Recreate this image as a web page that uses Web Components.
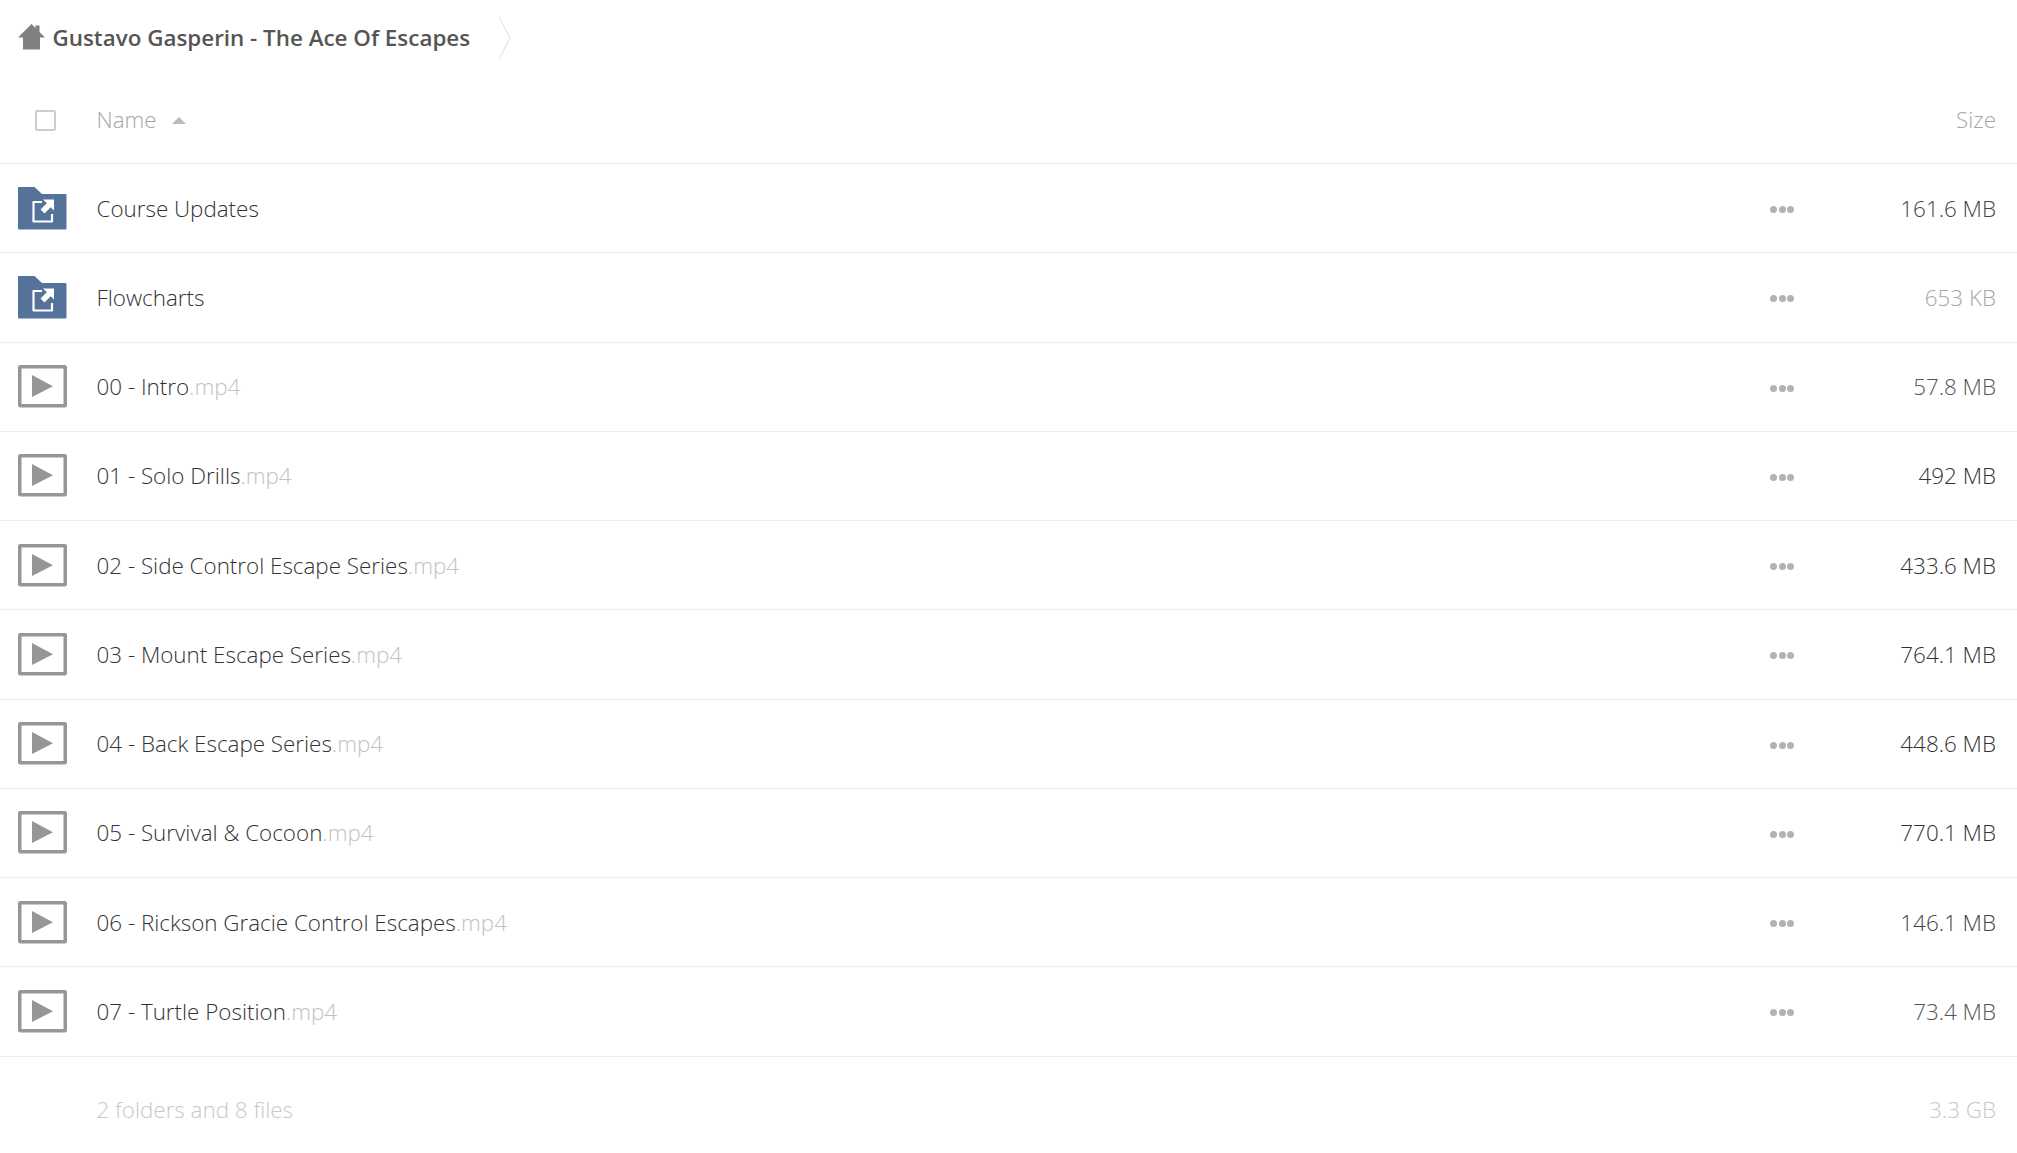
<!DOCTYPE html>
<html>
<head>
<meta charset="utf-8">
<title>Files</title>
<style>
html,body{margin:0;padding:0;background:#fff}
body{font-family:"Open Sans","Liberation Sans",sans-serif;font-weight:300;font-size:22.4px;color:#333;overflow:hidden}
</style>
</head>
<body>
<file-list>
  <crumb-bar label="Gustavo Gasperin - The Ace Of Escapes"></crumb-bar>
  <list-header></list-header>
  <file-row type="folder" name="Course Updates" size="161.6 MB" tone="#444"></file-row>
  <file-row type="folder" name="Flowcharts" size="653 KB" tone="#a6a6a6"></file-row>
  <file-row type="video" name="00 - Intro" ext=".mp4" size="57.8 MB" tone="#555"></file-row>
  <file-row type="video" name="01 - Solo Drills" ext=".mp4" size="492 MB" tone="#333"></file-row>
  <file-row type="video" name="02 - Side Control Escape Series" ext=".mp4" size="433.6 MB" tone="#333"></file-row>
  <file-row type="video" name="03 - Mount Escape Series" ext=".mp4" size="764.1 MB" tone="#333"></file-row>
  <file-row type="video" name="04 - Back Escape Series" ext=".mp4" size="448.6 MB" tone="#333"></file-row>
  <file-row type="video" name="05 - Survival &amp; Cocoon" ext=".mp4" size="770.1 MB" tone="#333"></file-row>
  <file-row type="video" name="06 - Rickson Gracie Control Escapes" ext=".mp4" size="146.1 MB" tone="#444"></file-row>
  <file-row type="video" name="07 - Turtle Position" ext=".mp4" size="73.4 MB" tone="#555"></file-row>
  <list-summary files="2 folders and 8 files" total="3.3 GB"></list-summary>
</file-list>
<script>
class FileList extends HTMLElement {
  constructor() {
    super();
    this.attachShadow({ mode: 'open' }).innerHTML = `
<style>
:host{display:flex;flex-direction:column;width:100%}
</style>
<slot></slot>`;
  }
}
customElements.define('file-list', FileList);

class CrumbBar extends HTMLElement {
  connectedCallback() {
    this.attachShadow({ mode: 'open' }).innerHTML = `
<style>
:host{display:flex;align-items:center;height:77px;padding:0 0 2px 18px;box-sizing:border-box}
.home{width:27px;height:26px;display:block;margin-right:7.500px;margin-top:-1px}
.label{font-weight:600;font-size:22.4px;color:#555;white-space:nowrap}
.chev{width:13px;height:44px;display:block;margin-left:28px}
</style>
<svg class="home" viewBox="0 0 27 26"><path fill="#808080" d="M13.5 0 L17.5 4 V1.5 H21.5 V8 L27 13.5 H22 V25.5 H5 V13.5 H0 Z"/></svg>
<span class="label">${this.getAttribute('label')}</span>
<svg class="chev" viewBox="0 0 13 44"><path fill="none" stroke="#ddd" stroke-width="1" d="M1 1 L12 22 L1 43"/></svg>`;
  }
}
customElements.define('crumb-bar', CrumbBar);

class ListHeader extends HTMLElement {
  constructor() {
    super();
    this.attachShadow({ mode: 'open' }).innerHTML = `
<style>
:host{display:flex;align-items:center;height:87px;box-sizing:border-box;border-bottom:1px solid #eee;color:#a6a6a6;padding-right:21px}
.box{width:21px;height:21px;box-sizing:border-box;border:2px solid #ccc;border-radius:2px;margin-left:35px;margin-right:40.500px}
.title{margin-bottom:2px}
.sort{width:0;height:0;border-left:7px solid transparent;border-right:7px solid transparent;border-bottom:7px solid #bbb;margin-left:15px}
.size{margin-left:auto;margin-bottom:2px}
</style>
<span class="box"></span><span class="title">Name</span><span class="sort"></span><span class="size">Size</span>`;
  }
}
customElements.define('list-header', ListHeader);

const ICONS = {
  folder: `<svg width="49" height="43" viewBox="0 0 49 43"><path fill="#55739a" d="M1 0 H16.500 L24 7 H47.500 Q48.500 7 48.500 8 V41.500 Q48.500 42.500 47.500 42.500 H1 Q0 42.500 0 41.500 V1 Q0 0 1 0 Z"/><path fill="none" stroke="#fff" stroke-width="2.200" stroke-linejoin="round" d="M24 15 H15.500 V34.500 H34 V27"/><path fill="#fff" d="M36 12.500 V23.500 L32.700 20.200 L26.500 26.500 L22.500 22.500 L28.800 16.200 L25 12.500 Z"/></svg>`,
  video: `<svg width="49" height="43" viewBox="0 0 49 43"><rect x="1.750" y="1.750" width="45.500" height="39" rx="0.500" fill="none" stroke="#969696" stroke-width="3.500"/><path fill="#969696" d="M14 10 L35 21.200 L14 32 Z"/></svg>`
};

class FileRow extends HTMLElement {
  connectedCallback() {
    const ext = this.getAttribute('ext');
    this.attachShadow({ mode: 'open' }).innerHTML = `
<style>
:host{display:flex;align-items:center;height:89.25px;box-sizing:border-box;border-bottom:1px solid #eee;padding:0 21px 0 17.500px;flex:none}
.icon{width:49px;height:43px;margin-right:30px;display:block}
.icon svg{display:block}
.name{white-space:nowrap}
.ext{color:#c2c2c2}
.dots{margin-left:auto;display:flex;gap:1.500px;margin-top:3px}
.dots i{width:7px;height:7px;border-radius:50%;background:#b3b3b3;display:block}
.size{width:202px;text-align:right;white-space:nowrap}
</style>
<span class="icon">${ICONS[this.getAttribute('type')]}</span>
<span class="name">${this.getAttribute('name')}${ext ? `<span class="ext">${ext}</span>` : ''}</span>
<span class="dots"><i></i><i></i><i></i></span>
<span class="size" style="color:${this.getAttribute('tone')}">${this.getAttribute('size')}</span>`;
  }
}
customElements.define('file-row', FileRow);

class ListSummary extends HTMLElement {
  connectedCallback() {
    this.attachShadow({ mode: 'open' }).innerHTML = `
<style>
:host{display:flex;justify-content:space-between;align-items:center;height:105px;padding:0 21px 0 96.500px;color:#c8c8c8}
</style>
<span>${this.getAttribute('files')}</span><span>${this.getAttribute('total')}</span>`;
  }
}
customElements.define('list-summary', ListSummary);
</script>
</body>
</html>
